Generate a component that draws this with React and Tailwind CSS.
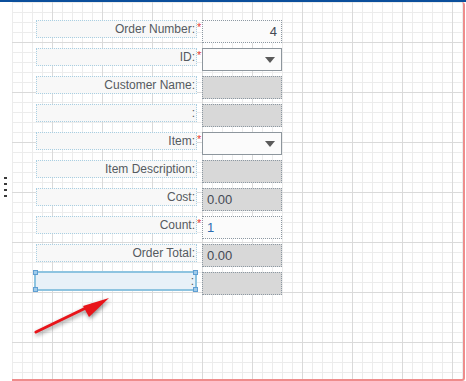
import React from "react";

const rows = [
  { label: "Order Number:", required: true, kind: "text", value: "4", align: "right" },
  { label: "ID:", required: true, kind: "select" },
  { label: "Customer Name:", kind: "readonly" },
  { label: ":", kind: "readonly" },
  { label: "Item:", required: true, kind: "select" },
  { label: "Item Description:", kind: "readonly" },
  { label: "Cost:", kind: "readonly", value: "0.00" },
  { label: "Count:", required: true, kind: "text", value: "1", blue: true },
  { label: "Order Total:", kind: "readonly", value: "0.00" },
  { label: ":", kind: "readonly", selected: true },
];

function Handle({ className }) {
  return (
    <span
      className={
        "absolute w-[5px] h-[5px] bg-[#9fcbea] border border-[#5f9fd3] " +
        className
      }
    />
  );
}

function Field({ row }) {
  if (row.kind === "select") {
    return (
      <div className="w-[80px] h-[23px] bg-[#fbfbfb] border border-[#8d969d] flex items-center justify-end pr-[6px]">
        <svg width="10" height="6" viewBox="0 0 10 6">
          <path d="M0 0 L10 0 L5 6 Z" fill="#5a5a5a" />
        </svg>
      </div>
    );
  }
  const base =
    row.kind === "readonly"
      ? "bg-[#d8d8d8] border-[#8c98a2]"
      : "bg-[#fbfbfb] border-[#8c98a2]";
  return (
    <div
      className={
        "w-[80px] h-[23px] border border-dotted flex items-center text-[13px] " +
        base +
        (row.align === "right" ? " justify-end pr-[4px]" : " pl-[4px]")
      }
    >
      <span className={row.blue ? "text-[#2b6cb0]" : "text-[#444a55]"}>
        {row.value}
      </span>
    </div>
  );
}

export default function App() {
  return (
    <div className="w-[466px] h-[381px] bg-white overflow-hidden font-['Liberation_Sans',Arial,sans-serif]">
      <div className="h-[2px] bg-[#0b4f9c]" />
      <div className="flex h-[379px]">
        {/* left gutter with drag dots */}
        <div className="w-[12px] pt-[175px] pl-[4px] flex flex-col gap-[4px]">
          <span className="w-[3px] h-[2px] bg-[#3a3a3a]" />
          <span className="w-[3px] h-[2px] bg-[#3a3a3a]" />
          <span className="w-[3px] h-[2px] bg-[#3a3a3a]" />
          <span className="w-[3px] h-[2px] bg-[#3a3a3a]" />
        </div>

        {/* design canvas */}
        <div className="relative w-[453px] border-r-2 border-b-2 border-[#ef8c8c] rounded-br-[3px] rounded-tr-[3px] bg-white bg-[linear-gradient(to_right,#dadada_1px,transparent_1px),linear-gradient(to_bottom,#dadada_1px,transparent_1px),linear-gradient(to_right,#ececec_1px,transparent_1px),linear-gradient(to_bottom,#ececec_1px,transparent_1px)] bg-[size:50px_50px,50px_50px,10px_10px,10px_10px] bg-[position:40px_40px,40px_40px,0_0,0_0]">
          <div className="pt-[18px] pl-[24px] flex flex-col">
            {rows.map((row, idx) => (
              <div key={idx} className="h-[28px] flex items-start">
                {row.selected ? (
                  <div className="relative -ml-[2px] -mt-[1px] w-[163px] h-[20px] border-2 border-[#8ec4e0] bg-[#e8f1f8] flex items-center justify-end pr-[1px] text-[12px] text-[#555]">
                    {row.label}
                    <Handle className="-left-[3px] -top-[3px]" />
                    <Handle className="-right-[3px] -top-[3px]" />
                    <Handle className="-left-[3px] -bottom-[3px]" />
                    <Handle className="-right-[3px] -bottom-[3px]" />
                  </div>
                ) : (
                  <div className="w-[161px] h-[18px] border border-dotted border-[#a9cfe2] bg-[#f8f8f8] flex items-center justify-end pr-[1px] text-[12px] text-[#555a60]">
                    {row.label}
                  </div>
                )}
                <div className="w-[5px] h-[18px] text-[11px] leading-[10px] pt-[2px] text-[#e53935]">
                  {row.required ? "*" : ""}
                </div>
                <Field row={row} />
              </div>
            ))}
          </div>

          {/* annotation arrow */}
          <svg
            className="absolute left-[18px] top-[290px] drop-shadow-[1px_2px_2px_rgba(0,0,0,0.45)]"
            width="80"
            height="46"
            viewBox="0 0 80 46"
          >
            <line x1="6" y1="40" x2="62" y2="13" stroke="#e8141a" strokeWidth="3" strokeLinecap="round" />
            <path d="M79 6 L53 14 L59 25 Z" fill="#e8141a" />
          </svg>
        </div>
      </div>
    </div>
  );
}
